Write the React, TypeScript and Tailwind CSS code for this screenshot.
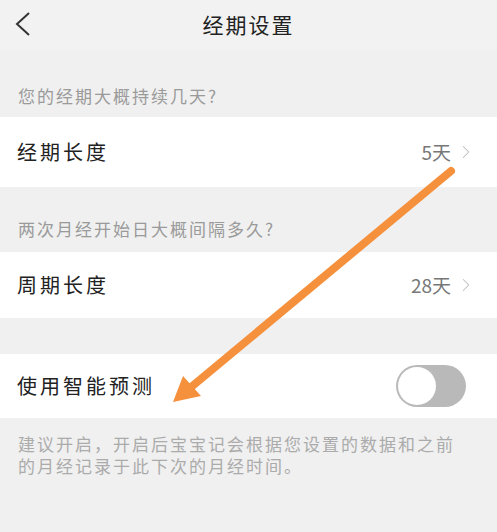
import { ChevronRight } from "lucide-react";

const cjk = { fontFamily: '"Noto Sans CJK SC", "Noto Sans", sans-serif' };

const SectionLabel = ({ text, className }: { text: string; className: string }) => (
  <div className={`px-[18px] text-[17px] leading-6 tracking-[2px] text-[#9a9a9a] ${className}`}>{text}</div>
);

const ValueRow = ({ label, value, height }: { label: string; value: string; height: string }) => (
  <div className={`flex items-center justify-between bg-white pl-[17px] pr-[20px] ${height}`}>
    <span className="text-[20px] tracking-[3px] text-[#222]">{label}</span>
    <div className="flex items-center gap-[4px]">
      <span className="text-[19px] text-[#777]">{value}</span>
      <ChevronRight size={22} strokeWidth={1.1} className="text-[#bbb]" />
    </div>
  </div>
);

export default function App() {
  return (
    <div className="relative w-[497px] h-[532px] overflow-hidden bg-[#f0f0f0]" style={cjk}>
      <div className="relative flex h-[50px] items-center justify-center bg-[#f2f2f2]">
        <svg className="absolute left-[14px] top-[11px]" width="18" height="26" viewBox="0 0 18 26">
          <path d="M15 2 L3 13 L15 24" fill="none" stroke="#333" strokeWidth="2" />
        </svg>
        <span className="text-[21px] tracking-[2px] text-[#222]">经期设置</span>
      </div>

      <SectionLabel text="您的经期大概持续几天?" className="pt-[34px] pb-[9px]" />
      <ValueRow label="经期长度" value="5天" height="h-[70px]" />

      <SectionLabel text="两次月经开始日大概间隔多久?" className="pt-[30px] pb-[11px]" />
      <ValueRow label="周期长度" value="28天" height="h-[66px]" />

      <div className="h-[36px]" />
      <div className="flex h-[64px] items-center justify-between bg-white pl-[17px] pr-[31px]">
        <span className="text-[20px] tracking-[3px] text-[#222]">使用智能预测</span>
        <div className="flex h-[42px] w-[70px] items-center rounded-full bg-[#b9b9b9] p-[2px]">
          <div className="h-[38px] w-[38px] rounded-full bg-white" />
        </div>
      </div>

      <div className="pl-[18px] pr-[30px] pt-[15px] text-[17px] leading-[22px] tracking-[2px] text-[#ababab]">
        建议开启，开启后宝宝记会根据您设置的数据和之前的月经记录于此下次的月经时间。
      </div>

      <svg className="absolute left-0 top-0 pointer-events-none" width="497" height="532" viewBox="0 0 497 532">
        <line x1="451" y1="171" x2="190" y2="388" stroke="#f5903c" strokeWidth="8" strokeLinecap="round" />
        <polygon points="173,402 183,376 201,396" fill="#f5903c" />
      </svg>
    </div>
  );
}
